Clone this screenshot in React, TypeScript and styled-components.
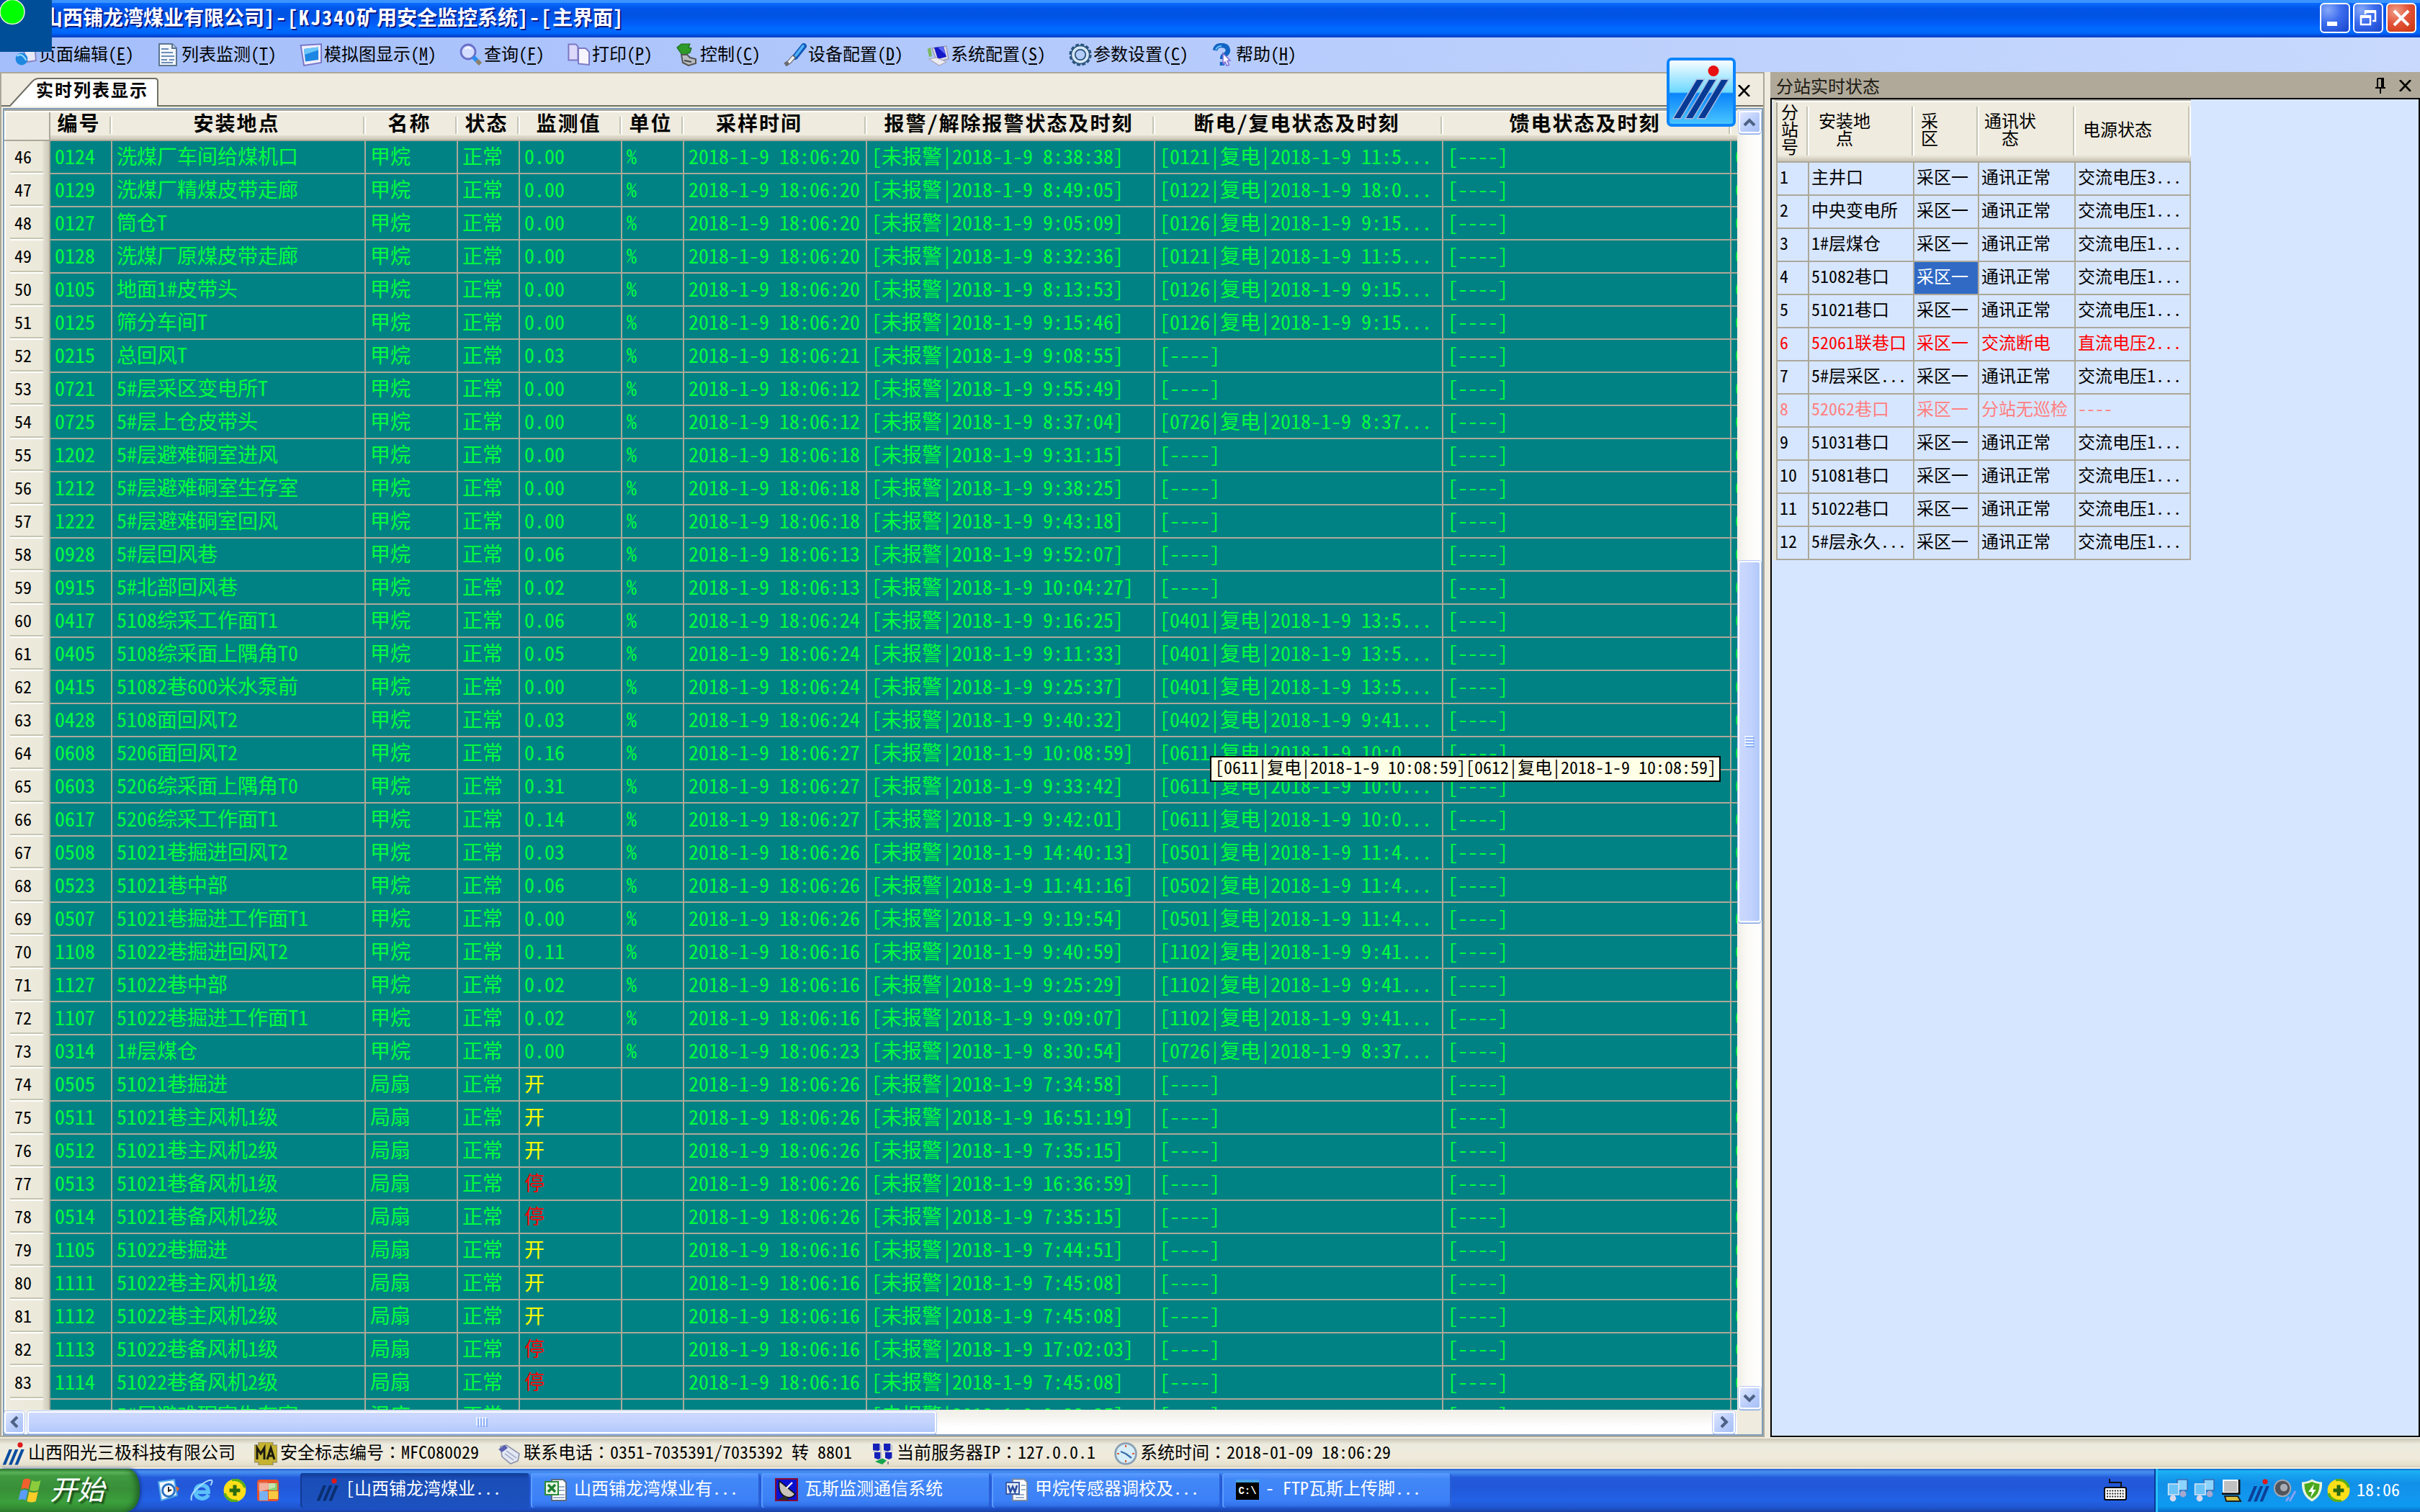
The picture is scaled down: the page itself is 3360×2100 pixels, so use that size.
import React from 'react';
import styled, { createGlobalStyle, css } from 'styled-components';

const Global = createGlobalStyle`
  * { box-sizing: border-box; }
  html, body { margin: 0; padding: 0; overflow: hidden; background: #efebde; }
  body {
    font-family: 'Noto Sans CJK SC', 'Noto Sans', sans-serif;
    font-feature-settings: 'hwid' 1;
    font-size: 24px;
    line-height: 1;
    color: #000;
    white-space: pre;
  }
  svg { display: block; flex: none; }
`;

const line = '#aca899';
const face = '#efebde';

const Screen = styled.div`
  position: relative;
  width: 3360px;
  height: 2100px;
  display: flex;
  flex-direction: column;
  overflow: hidden;
`;

/* ---------- title bar ---------- */
const TitleBar = styled.header`
  height: 52px;
  flex: none;
  display: flex;
  align-items: center;
  justify-content: space-between;
  padding: 0 5px 3px 59px;
  background: linear-gradient(#3a93ff 0, #3a93ff 4px, #0a6dff 4px, #0054e8 12px, #0053e2 22px, #005cf8 32px, #006bff 40px, #0066fa 46px, #0046d2 50px, #003fc4 52px);
`;
const Title = styled.h1`
  margin: 0;
  padding-bottom: 4px;
  font-size: 28px;
  font-weight: 700;
  color: #fff;
  text-shadow: 2px 2px 0 #0a1883;
`;
const Wide = styled.span`
  letter-spacing: 2px;
`;
const WindowButtons = styled.div`
  display: flex;
  gap: 4px;
`;
const WindowButton = styled.button<{ $close?: boolean }>`
  width: 42px;
  height: 42px;
  padding: 0;
  border: 2px solid #fff;
  border-radius: 6px;
  display: grid;
  place-items: center;
  background: ${p => p.$close
    ? 'radial-gradient(circle at 30% 25%, #f0a088 0, #e2553a 45%, #c8330c 100%)'
    : 'radial-gradient(circle at 25% 20%, #86a8f8 0, #3c6cee 45%, #1745cc 100%)'};
`;

/* ---------- menu bar ---------- */
const MenuBar = styled.nav`
  height: 48px;
  flex: none;
  display: flex;
  align-items: center;
  gap: 32px;
  padding-left: 20px;
  background: linear-gradient(90deg, #a4befb, #c8d9fd);
`;
const MenuItem = styled.div`
  display: flex;
  align-items: center;
  gap: 2px;
  height: 48px;
`;
const MenuText = styled.span`
  padding-bottom: 4px;
  u { text-underline-offset: 4px; text-decoration-thickness: 2px; }
`;

/* ---------- work area ---------- */
const Main = styled.main`
  height: 1898px;
  flex: none;
  display: flex;
  gap: 8px;
  background: ${face};
`;
const LeftPane = styled.section`
  width: 2450px;
  height: 1896px;
  display: flex;
  flex-direction: column;
  gap: 2px;
  border: 2px solid ${line};
`;
const TabStrip = styled.div`
  height: 46px;
  flex: none;
  display: flex;
  justify-content: space-between;
  align-items: flex-end;
  padding: 0 17px 0 10px;
  border-bottom: 2px solid #716f64;
`;
const Tab = styled.div`
  width: 208px;
  height: 40px;
  margin-bottom: -2px;
  display: grid;
  > * { grid-area: 1 / 1; }
`;
const TabLabel = styled.span`
  padding: 4px 0 0 38px;
  font-weight: 700;
  letter-spacing: 2px;
`;
const TabClose = styled.div`
  padding-bottom: 12px;
`;
const GridFrame = styled.div`
  flex: 1;
  min-height: 0;
  margin-left: 2px;
  border: 2px solid #7f9db9;
  display: grid;
  grid-template-columns: 2406px 34px;
  grid-template-rows: 1806px 34px;
  background: ${face};
`;
const Sheet = styled.div`
  border-top: 2px solid ${line};
  overflow: hidden;
`;
const cols = '64px 86px 352px 128px 86px 142px 86px 254px 400px 400px 400px 8px';
const HeadRow = styled.div`
  display: grid;
  grid-template-columns: ${cols};
  height: 42px;
  border-top: 2px solid #fff;
  border-bottom: 2px solid ${line};
  background: linear-gradient(${face} 0, ${face} 32px, #e3dfd1 32px, #d8d2c4 35px, #cbc7b8 38px);
`;
const HeadCorner = styled.div`
  border-left: 2px solid #fff;
  border-right: 2px solid ${line};
  background: ${face};
`;
const HeadCell = styled.div<{ $sort?: boolean }>`
  display: flex;
  justify-content: center;
  font-size: 28px;
  font-weight: 700;
  letter-spacing: 2px;
  padding: 0 ${p => (p.$sort ? 46 : 7)}px 0 0;
  background: linear-gradient(90deg, #c6c5b5 50%, #fff 50%) no-repeat right 0 top 6px / 4px 24px;
`;
const DataRow = styled.div`
  display: grid;
  grid-template-columns: ${cols};
  height: 46px;
`;
const RowNo = styled.div`
  display: flex;
  align-items: center;
  padding: 0 0 5px 12px;
  border-left: 2px solid #fff;
  border-right: 2px solid ${line};
  background:
    linear-gradient(#c6c5b0 50%, #fff 50%) no-repeat 6px 42px / 46px 4px,
    linear-gradient(90deg, ${face} 0, #ebe9da 50px, #ddd9ca 54px, #c9c5b5 62px);
`;
type Tone = 'green' | 'yellow' | 'red';
const tones: Record<Tone, string> = { green: '#00ff40', yellow: '#ffff00', red: '#ff0000' };
const Cell = styled.div<{ $tone?: Tone }>`
  display: flex;
  align-items: center;
  overflow: hidden;
  padding: 0 0 5px 6px;
  font-size: 28px;
  line-height: 40px;
  color: ${p => tones[p.$tone ?? 'green']};
  background: #008284;
  border-right: 2px solid ${line};
  border-bottom: 2px solid ${line};
  &:last-child { padding-left: 5px; border-right: 0; }
`;

/* ---------- scroll bars ---------- */
const VTrack = styled.div`
  display: flex;
  flex-direction: column;
  align-items: center;
  padding: 2px 0 0;
  background: linear-gradient(90deg, #f0eee6, #fbfaf6 40%, #fff);
`;
const HTrack = styled.div`
  display: flex;
  align-items: center;
  background: linear-gradient(#f0eee6, #f8f7f4 40%, #fff 70%);
`;
const knob = css`
  display: grid;
  place-items: center;
  border: 2px solid #fff;
  border-radius: 4px;
  box-shadow: 0 0 0 1px #b4c8f4, 0 2px 0 0 #8cabe0;
  flex: none;
`;
const Arrow = styled.div<{ $w?: number }>`
  ${knob}
  width: ${p => p.$w ?? 31}px;
  height: 31px;
  background: linear-gradient(135deg, #dfe7ff, #b8ccfb 60%, #a9c1f7);
`;
const VThumb = styled.div`
  ${knob}
  width: 32px;
  height: 502px;
  margin: 594px 0 645px;
  background: linear-gradient(90deg, #ccd9ff, #c3d3fd 50%, #b2c9fb);
`;
const HThumb = styled.div`
  ${knob}
  width: 1262px;
  height: 31px;
  margin: 0 1078px 0 4px;
  background: linear-gradient(#ced9ff, #c3d3fd 50%, #b2c9fb);
`;

/* ---------- sub-station panel ---------- */
const RightPane = styled.section`
  width: 902px;
  height: 1896px;
  display: flex;
  flex-direction: column;
`;
const PanelTitle = styled.div`
  height: 36px;
  flex: none;
  display: flex;
  align-items: center;
  justify-content: space-between;
  padding: 2px 11px 0 8px;
  background: #b0a999;
  color: #1c1a14;
`;
const PanelTools = styled.div`
  display: flex;
  gap: 18px;
  align-items: center;
`;
const PanelBody = styled.div`
  flex: 1;
  border: 2px solid #000;
  background: #d7e6ff;
  padding-left: 2px;
`;
const StationTable = styled.div`
  width: 580px;
  border-left: 4px solid #e6e3d2;
  border-top: 2px solid ${line};
`;
const stationCols = '46px 146px 90px 134px 160px';
const StationHead = styled.div`
  display: grid;
  grid-template-columns: ${stationCols};
  height: 86px;
  border-top: 2px solid #fff;
  border-bottom: 2px solid ${line};
  background: linear-gradient(${face} 0, ${face} 73px, #e3dfd1 76px, #d5cfc1 79px, #c6c2b4 82px);
`;
const StationHeadCell = styled.div<{ $pad: number }>`
  display: flex;
  flex-direction: column;
  align-items: center;
  justify-content: center;
  text-align: center;
  line-height: 24px;
  padding: 0 ${p => p.$pad}px 9px 0;
  background: linear-gradient(90deg, #c6c5b5 50%, #fff 50%) no-repeat right 0 top 6px / 4px 68px;
  &:first-child { border-left: 2px solid ${line}; }
`;
type Level = 'ok' | 'alarm' | 'lost';
const levels: Record<Level, string> = { ok: '#000', alarm: '#ff0000', lost: '#ff8080' };
const StationRow = styled.div<{ $level: Level }>`
  display: grid;
  grid-template-columns: ${stationCols};
  height: 46px;
  color: ${p => levels[p.$level]};
`;
const StationCell = styled.div<{ $selected?: boolean }>`
  display: flex;
  align-items: center;
  padding: 0 0 6px 3px;
  border-right: 2px solid ${line};
  border-bottom: 2px solid ${line};
  &:first-child { border-left: 2px solid ${line}; }
  ${p => p.$selected && css`
    background: #316ac5;
    color: #fff;
  `}
`;

/* ---------- status bar ---------- */
const StatusBar = styled.footer`
  height: 42px;
  flex: none;
  display: flex;
  align-items: center;
  gap: 26px;
  padding-left: 3px;
  background: linear-gradient(#c8c4b6 0, #dedacb 4px, #ecebdf 8px, #f0ebdb 26px, #e6e1ce 36px, #d8d0bb 40px, #f2efe2 40px);
`;
const StatusItem = styled.div`
  display: flex;
  align-items: center;
  gap: 4px;
`;
const StatusText = styled.span`
  padding-bottom: 6px;
`;
const Colon = styled.span`
  font-family: 'Noto Sans CJK TC', 'Noto Sans CJK JP', sans-serif;
  font-feature-settings: normal;
`;

/* ---------- task bar ---------- */
const TaskBar = styled.footer`
  height: 60px;
  flex: none;
  display: flex;
  color: #fff;
  background: linear-gradient(#2b5fd0 0, #4690f0 4px, #3a80ea 7px, #245bdc 12px, #2157d8 24px, #2361e6 44px, #1f55cf 54px, #1941a5 60px);
`;
const StartButton = styled.div`
  width: 194px;
  display: flex;
  align-items: center;
  gap: 10px;
  padding-left: 22px;
  border-radius: 0 16px 20px 0 / 0 28px 28px 0;
  background: linear-gradient(#2c7a2c 0, #5cb45c 5px, #3f9a3f 10px, #388f38 28px, #3ba03b 46px, #2f8030 60px);
  box-shadow: inset -8px 0 10px -4px #1d5d22, 2px 0 4px #16389c;
`;
const StartText = styled.span`
  font-size: 38px;
  font-style: italic;
  text-shadow: 3px 3px 2px #1c4f1c;
  padding-bottom: 6px;
`;
const QuickLaunch = styled.div`
  width: 223px;
  display: flex;
  align-items: center;
  gap: 14px;
  padding-left: 24px;
`;
const Tasks = styled.div`
  display: flex;
  gap: 2px;
  align-items: center;
  flex: 1;
`;
const TaskButton = styled.div<{ $active?: boolean }>`
  width: 318px;
  height: 48px;
  display: flex;
  align-items: center;
  gap: 9px;
  padding: 0 0 2px ${p => (p.$active ? 22 : 19)}px;
  border-radius: 4px;
  background: ${p => p.$active
    ? 'linear-gradient(#123c98, #1a4db6 8px, #1c52c0)'
    : 'linear-gradient(#5a9cff, #4288f8 8px, #3c80f6 38px, #2e6ce4)'};
  box-shadow: inset 2px 0 0 ${p => (p.$active ? '#123a94' : '#5c9cfc')}, inset -2px -2px 0 ${p => (p.$active ? '#1b4fbc' : '#2a60d4')};
`;
const TaskText = styled.span`
  padding-bottom: 6px;
`;
const Keyboard = styled.div`
  display: flex;
  align-items: center;
  padding-right: 38px;
`;
const Tray = styled.div`
  width: 369px;
  display: flex;
  align-items: center;
  gap: 5px;
  padding-left: 16px;
  border-left: 2px solid #0a3a98;
  background: linear-gradient(#0c5ac8 0, #1cb4f4 3px, #18a4f0 8px, #1290e8 20px, #1296ee 40px, #0c9af0 52px, #0a6cc8 60px);
  box-shadow: inset 3px 0 0 #24c0f8;
`;
const Clock = styled.span`
  padding: 0 0 5px 4px;
`;

/* ---------- floating windows over the desktop ---------- */
const CornerBadge = styled.div`
  position: absolute;
  left: 0;
  top: 0;
  width: 72px;
  height: 72px;
  background: #004e98;
`;
const LogoBadge = styled.div`
  position: absolute;
  left: 2314px;
  top: 80px;
`;
const Tip = styled.div`
  position: absolute;
  left: 1680px;
  top: 1050px;
  width: 709px;
  height: 36px;
  display: flex;
  align-items: center;
  padding: 0 0 6px 5px;
  border: 2px solid #000;
  background: #ffffe7;
`;

/* ---------- icons (16-unit artboards) ---------- */
const Icon = ({ children, size = 32 }: { children: React.ReactNode; size?: number }) => (
  <svg width={size} height={size} viewBox="0 0 16 16">{children}</svg>
);
const PageIcon = () => (
  <Icon><path d="M5 1h9l1 11-6 1z" fill="#e8e8f8" stroke="#8a86c4" /><circle cx="5" cy="11" r="4.2" fill="#1e88e0" /><path d="M2 9q2-2 4 0t2 3" fill="none" stroke="#9fe0ff" /></Icon>
);
const ListIcon = () => (
  <Icon><path d="M1.5.5h9l3 3v12h-12z" fill="#f4f8fd" stroke="#5d7590" /><path d="M10.5.5v3h3" fill="#c5d4e4" stroke="#5d7590" /><path d="M3 4h5M3 6.500h8M3 9h9M3 11.500h4M8.500 11.500h3.500M3 13.500h8" stroke="#6c8db8" /></Icon>
);
const PictureIcon = () => (
  <Icon><path d="M.8 1.500 15 .6v12.900L3 15.500z" fill="#f0effc" stroke="#7a78c8" /><path d="M3 4l10-1.200v8.700L4 12.800z" fill="#1c86e2" /><path d="M3 4l10-1.200v2L3.400 8z" fill="#6cc6f8" /></Icon>
);
const SearchIcon = () => (
  <Icon><circle cx="6" cy="6" r="5" fill="#d4dcff" stroke="#6a70c8" strokeWidth="1.400" /><path d="M4 4q2-2 4 0" stroke="#fff" fill="none" /><path d="M9.500 9.500l2.500 2.500" stroke="#2a8cf0" strokeWidth="3" /><path d="M12 12l2.500 2.500" stroke="#8b806a" strokeWidth="3" /></Icon>
);
const PrintIcon = () => (
  <Icon><path d="M.7.7h5l1.500 1.600v9.500H.7z" fill="#dcd8fa" stroke="#7c78c4" /><path d="M7.500 3.500h5l2.500 2.500v9l-7.500-.8z" fill="#f6f5ff" stroke="#7c78c4" /></Icon>
);
const ControlIcon = () => (
  <Icon><path d="M1 3 4 .5h6L9 3l2 .5-1 3-5 2-2-2.500z" fill="#2f9a28" stroke="#1b6b1a" strokeWidth=".6" /><path d="M4 8h4l2 2 4 1v3l-5 1.500-4-2z" fill="#b8bcc0" stroke="#555" /><path d="M6 12l5 1" stroke="#444" /></Icon>
);
const BrushIcon = () => (
  <Icon><path d="M14 2 8 9.500" stroke="#1158b8" strokeWidth="4" strokeLinecap="round" /><path d="M13.500 2 8.500 8.500" stroke="#53b4f8" strokeWidth="1.800" strokeLinecap="round" /><path d="M7.500 9 4 13l-3 2" stroke="#6c6c70" strokeWidth="3" fill="none" /><path d="M7 9.500 3.500 13.500" stroke="#f2f2f2" strokeWidth="1.800" /></Icon>
);
const ComputerIcon = () => (
  <Icon><path d="M4 3.500 14 2l1.500 9-8 2z" fill="#dcdce8" stroke="#9a9ab0" strokeWidth=".7" /><path d="M5.500 3 12 2.200 14 9.500 8 11z" fill="#1418c8" /><path d="M8 3l4-.6L13.500 8z" fill="#5a66f0" /><path d="M2 11l5-1 7 3-5 2.500z" fill="#ecebf2" stroke="#a8a8b8" strokeWidth=".6" /><path d="M.8 4 3 3l1 6-2 .5z" fill="#7cb860" /></Icon>
);
const GearIcon = () => (
  <Icon><circle cx="8" cy="8" r="6.800" fill="none" stroke="#29527c" strokeWidth="2" strokeDasharray="2.300 1.260" /><circle cx="8" cy="8" r="5.200" fill="none" stroke="#d5e6f4" strokeWidth="2.600" /><circle cx="8" cy="8" r="6.300" fill="none" stroke="#29527c" strokeWidth=".8" /><circle cx="8" cy="8" r="3.600" fill="#b4ccf8" stroke="#29527c" strokeWidth=".9" /></Icon>
);
const HelpIcon = () => (
  <Icon><path d="M2.500 5Q3 1.500 7 1.500t4.500 3.200Q11.500 7 9 8.200 7.500 9 7.500 11M7.500 13v2.500" fill="none" stroke="#1264c4" strokeWidth="3.200" /><path d="M3 4.500Q4 2 7 2" fill="none" stroke="#6cc2fa" /><path d="M8 7l5 5-2 .3 1.200 2.700-1.500.6L9.500 13 8 14.500z" fill="#fff" stroke="#8270d8" strokeWidth=".8" /></Icon>
);
const SlashLogo = ({ color = '#0b4da0' }: { color?: string }) => (
  <Icon><path d="M.3 15.800 4.800 5H7L2.500 15.800zM4.500 15.800 9 5h2.200L6.700 15.800zM8.700 15.800 13.200 5h2.200L10.900 15.800z" fill={color} /><circle cx="12.500" cy="1.900" r="1.800" fill="#e01818" /></Icon>
);
const MaIcon = () => (
  <Icon><path d="M3 0h10v2h3v12h-3v2H3v-2H0V2h3z" fill="#c4b230" stroke="#8a8070" strokeWidth=".6" /><path d="M2 12V4l2.500 4L7 4v8M9 12l2.500-8L14 12M10 9.500h3" fill="none" stroke="#1a1a10" strokeWidth="1.500" /></Icon>
);
const PhoneIcon = () => (
  <Icon><path d="M2 3l4-1 9 6-1 5-5 2-6-5z" fill="#e4e8f4" stroke="#8a90a8" strokeWidth=".8" /><path d="M.5 5 5 2l2 2-4 3z" fill="#5a5fb0" /><path d="M6 6l7 5M5 8l6 4.500" stroke="#a8b0cc" strokeWidth=".8" /></Icon>
);
const ServerIcon = () => (
  <Icon><path d="M1.500 1h4.700v4.500l-2 1-2.700-1zM9 1h4.700v4.500l-2 1-2.700-1zM2.500 7h4.700v4l-2 1-2.700-1zM10 7h4.700v4l-2 1-2.700-1z" fill="#1420b8" /><path d="M7 2v9M14.700 2v4M1.500 6.200h3M9 6.500h2" stroke="#b8bcc8" strokeWidth=".8" /><path d="M3 13.500l5-2.200 3 1.500-3 2.700z" fill="#16a44c" /><path d="M12 13.500v2" stroke="#889" /></Icon>
);
const ClockIcon = () => (
  <Icon><circle cx="8" cy="8" r="7.200" fill="#d6eefa" stroke="#8aa0b4" strokeWidth="1.400" /><path d="M8 8 4.500 6.500M8 8l4 3" stroke="#3a6ea8" strokeWidth="1.200" /><path d="M8 2v1.500M8 12.500V14M2 8h1.500M12.500 8H14" stroke="#e05a30" /></Icon>
);
const FlagIcon = () => (
  <svg width="37" height="37" viewBox="0 0 18 18">
    <path d="M5 1.500q2.500-1.500 5 0L8.500 8q-2.500-1.500-5 0z" fill="#f0602c" />
    <path d="M10.800 2q3 1.500 6 0l-1.600 6.500q-3 1.500-6 0z" fill="#8ccc3c" />
    <path d="M3.200 9q2.500-1.500 5 0l-1.500 6.500q-2.500-1.500-5 0z" fill="#5a9cf8" />
    <path d="M9 9.500q3 1.500 6 0L13.500 16q-3 1.500-6 0z" fill="#fccc28" />
  </svg>
);
const OutlookIcon = () => (
  <Icon><path d="M1 2l11-1.500 2 11L3 15z" fill="#e8f4fe" stroke="#48a0e8" /><circle cx="8" cy="8" r="4.200" fill="#fff" stroke="#2a6fc0" strokeWidth="1.500" /><path d="M8 5.500v3l2-1" stroke="#222" fill="none" /><path d="M13 5l2.500 1.500L14 9z" fill="#f07020" /></Icon>
);
const IeIcon = () => (
  <Icon><path d="M12.800 11Q11 13.800 8 13.600 3.600 13 3.600 8.800 4 4.600 8.200 4.400q4.400.4 4.400 4.800H5" fill="none" stroke="#5cc0fa" strokeWidth="2.700" /><path d="M1 15Q-.5 11 6 5.500T15 1q.8 1-.8 3.500" fill="none" stroke="#a8dcfc" strokeWidth="1" /></Icon>
);
const PlusIcon = () => (
  <Icon><circle cx="8" cy="8" r="7.700" fill="#ffe018" /><path d="M6 .8A7.400 7.400 0 0 1 15 6M10 15.200A7.400 7.400 0 0 1 1 10" fill="none" stroke="#5cae18" strokeWidth="1.800" /><path d="M8 4.300v7.400M4.300 8h7.400" stroke="#2c6a10" strokeWidth="2.500" /></Icon>
);
const MediaIcon = () => (
  <Icon><rect x=".5" y=".5" width="15" height="15" rx="2" fill="#e8512c" /><path d="M1 2h7v6H1z" fill="#e87050" /><path d="M8.500 3h6v5h-6z" fill="#8cd070" /><path d="M2 8.500h6V15H2z" fill="#78b0f4" /><path d="M8.500 8.500H15V14H8.500z" fill="#f8c840" /><path d="M2 3h11v3L2 9z" fill="#fff" opacity=".45" /></Icon>
);
const ExcelIcon = () => (
  <Icon><path d="M5 1h8l2 2v12.500H5z" fill="#fff" stroke="#5d6b80" /><path d="M10 6h4M10 8.500h4M6 11.500h8M6 13.500h8" stroke="#9ab0c8" /><path d="M.5 2.500h9v9h-9z" fill="#e8f6e4" stroke="#2c8a38" /><path d="M2.500 4.500l5 5M7.500 4.500l-5 5" stroke="#1f8030" strokeWidth="1.700" /></Icon>
);
const DishIcon = () => (
  <Icon><path d="M.5.500h15v15H.5z" fill="#0a10d0" stroke="#8a0830" /><path d="M3 2q-1 8 3.500 10.500T14 11z" fill="#c8c4bc" stroke="#111" strokeWidth=".8" /><path d="M8 7l4-4" stroke="#fff" strokeWidth="1.200" /><path d="M2 15l5-3 3 3.500z" fill="#2a2a2a" /></Icon>
);
const WordIcon = () => (
  <Icon><path d="M5 .8h8l2 2v12.700H5z" fill="#fff" stroke="#7d8ba0" /><path d="M7 11.500h6M7 13.500h6M11 5h3M11 8h3" stroke="#9ab0c8" /><path d="M.5 3h9v8h-9z" fill="#e4ecfa" stroke="#3a5ca8" /><path d="M2 5l1.400 4.500L5 6l1.600 3.500L8 5" fill="none" stroke="#2a4ca0" strokeWidth="1.300" /></Icon>
);
const ConsoleMark = styled.div`
  width: 32px;
  height: 28px;
  flex: none;
  display: grid;
  place-items: center;
  border-top: 4px solid #48a4e8;
  background: #000;
  font: 700 14px/22px 'Liberation Mono', monospace;
  color: #fff;
`;
const KeyboardIcon = () => (
  <svg width="32" height="32" viewBox="0 0 16 16">
    <path d="M4 0v2.500h8v4" fill="none" stroke="#111" />
    <rect x=".5" y="6" width="15" height="8.500" rx="1" fill="#fff" stroke="#000" />
    <path d="M2 8.200h12M2 10.200h12M2 12.300h12" stroke="#222" strokeDasharray="1 .8" />
  </svg>
);
const NetIcon = () => (
  <Icon><path d="M7 .5h7v7.500H7z" fill="#8cd4fc" stroke="#3a6cb4" strokeWidth=".8" /><path d="M.8 3.500h7.200V11H.8z" fill="#6cc4f8" stroke="#d8e4f4" strokeWidth=".8" /><circle cx="4" cy="13.500" r="2.200" fill="#d8d8ec" /><circle cx="11" cy="10.500" r="2.200" fill="#a8a8cc" /></Icon>
);
const MonitorIcon = () => (
  <Icon><path d="M2 1h10v8.500H2z" fill="#c0c0c0" stroke="#fff" /><path d="M1 10.300h12V.5" fill="none" stroke="#111" strokeWidth="1.400" /><path d="M3 12h9l2 3.500H4z" fill="#d8c040" stroke="#222" /></Icon>
);
const SpeakerIcon = () => (
  <Icon><circle cx="6" cy="6.500" r="5.600" fill="#50545c" stroke="#a4a8b0" /><circle cx="7" cy="6" r="2.600" fill="#a8acb4" /><path d="M11 15.500l4-7M8.500 15.500l2-3" stroke="#8aa0f4" strokeWidth="1.400" /></Icon>
);
const ShieldIcon = () => (
  <Icon><path d="M8 .3q3.500 2 7 2 .5 9.700-7 13.400Q.5 12 1 2.300q3.500 0 7-2z" fill="#e8f4d8" /><path d="M8 2q2.700 1.400 5.300 1.500 0 7.500-5.300 10.300Q2.700 11 2.700 3.500 5.300 3.400 8 2z" fill="#4aa81c" /><path d="M9.500 3.500 5.500 9H8l-1 4 3.800-5.500H8.600z" fill="#fff" /></Icon>
);

const CloseGlyph = ({ w = 19 }: { w?: number }) => (
  <svg width={w} height="16" viewBox="0 0 19 16"><path d="M2 0 17 16M17 0 2 16" stroke="#000" strokeWidth="2.600" /></svg>
);
const Chevron = ({ turn }: { turn: number }) => (
  <svg width="18" height="18" viewBox="0 0 18 18" style={{ transform: `rotate(${turn}deg)` }}>
    <path d="M2 13 9 6l7 7" fill="none" stroke="#4d6185" strokeWidth="4" />
  </svg>
);

/* ---------- data ---------- */
const menu: [React.FC, string, string][] = [
  [PageIcon, '页面编辑', 'E'],
  [ListIcon, '列表监测', 'T'],
  [PictureIcon, '模拟图显示', 'M'],
  [SearchIcon, '查询', 'F'],
  [PrintIcon, '打印', 'P'],
  [ControlIcon, '控制', 'C'],
  [BrushIcon, '设备配置', 'D'],
  [ComputerIcon, '系统配置', 'S'],
  [GearIcon, '参数设置', 'C'],
  [HelpIcon, '帮助', 'H'],
];

const heads: [string, boolean?][] = [
  ['编号'], ['安装地点'], ['名称'], ['状态'], ['监测值'], ['单位'],
  ['采样时间', true], ['报警/解除报警状态及时刻'], ['断电/复电状态及时刻'], ['馈电状态及时刻'],
];

/* id, place, value, sample seconds, alarm time, power-cut record */
const methane: [string, string, string, string, string, string][] = [
  ['0124', '洗煤厂车间给煤机口', '0.00', '20', '8:38:38', '0121 11:5'],
  ['0129', '洗煤厂精煤皮带走廊', '0.00', '20', '8:49:05', '0122 18:0'],
  ['0127', '筒仓T', '0.00', '20', '9:05:09', '0126 9:15'],
  ['0128', '洗煤厂原煤皮带走廊', '0.00', '20', '8:32:36', '0121 11:5'],
  ['0105', '地面1#皮带头', '0.00', '20', '8:13:53', '0126 9:15'],
  ['0125', '筛分车间T', '0.00', '20', '9:15:46', '0126 9:15'],
  ['0215', '总回风T', '0.03', '21', '9:08:55', ''],
  ['0721', '5#层采区变电所T', '0.00', '12', '9:55:49', ''],
  ['0725', '5#层上仓皮带头', '0.00', '12', '8:37:04', '0726 8:37'],
  ['1202', '5#层避难硐室进风', '0.00', '18', '9:31:15', ''],
  ['1212', '5#层避难硐室生存室', '0.00', '18', '9:38:25', ''],
  ['1222', '5#层避难硐室回风', '0.00', '18', '9:43:18', ''],
  ['0928', '5#层回风巷', '0.06', '13', '9:52:07', ''],
  ['0915', '5#北部回风巷', '0.02', '13', '10:04:27', ''],
  ['0417', '5108综采工作面T1', '0.06', '24', '9:16:25', '0401 13:5'],
  ['0405', '5108综采面上隅角T0', '0.05', '24', '9:11:33', '0401 13:5'],
  ['0415', '51082巷600米水泵前', '0.00', '24', '9:25:37', '0401 13:5'],
  ['0428', '5108面回风T2', '0.03', '24', '9:40:32', '0402 9:41'],
  ['0608', '5206面回风T2', '0.16', '27', '10:08:59', '0611 10:0'],
  ['0603', '5206综采面上隅角T0', '0.31', '27', '9:33:42', '0611 10:0'],
  ['0617', '5206综采工作面T1', '0.14', '27', '9:42:01', '0611 10:0'],
  ['0508', '51021巷掘进回风T2', '0.03', '26', '14:40:13', '0501 11:4'],
  ['0523', '51021巷中部', '0.06', '26', '11:41:16', '0502 11:4'],
  ['0507', '51021巷掘进工作面T1', '0.00', '26', '9:19:54', '0501 11:4'],
  ['1108', '51022巷掘进回风T2', '0.11', '16', '9:40:59', '1102 9:41'],
  ['1127', '51022巷中部', '0.02', '16', '9:25:29', '1102 9:41'],
  ['1107', '51022巷掘进工作面T1', '0.02', '16', '9:09:07', '1102 9:41'],
  ['0314', '1#层煤仓', '0.00', '23', '8:30:54', '0726 8:37'],
];
const fans: [string, string, string, string, string][] = [
  ['0505', '51021巷掘进', '开', '26', '7:34:58'],
  ['0511', '51021巷主风机1级', '开', '26', '16:51:19'],
  ['0512', '51021巷主风机2级', '开', '26', '7:35:15'],
  ['0513', '51021巷备风机1级', '停', '26', '16:36:59'],
  ['0514', '51021巷备风机2级', '停', '26', '7:35:15'],
  ['1105', '51022巷掘进', '开', '16', '7:44:51'],
  ['1111', '51022巷主风机1级', '开', '16', '7:45:08'],
  ['1112', '51022巷主风机2级', '开', '16', '7:45:08'],
  ['1113', '51022巷备风机1级', '停', '16', '17:02:03'],
  ['1114', '51022巷备风机2级', '停', '16', '7:45:08'],
];

interface Reading {
  id: string;
  place: string;
  kind: string;
  value: string;
  unit: string;
  time: string;
  alarm: string;
  cut: string;
}
const readings: Reading[] = [
  ...methane.map(([id, place, value, s, alarm, cut]) => {
    const [no, at] = cut.split(' ');
    return {
      id, place, kind: '甲烷', value, unit: '%', time: `2018-1-9 18:06:${s}`, alarm,
      cut: cut ? `[${no}|复电|2018-1-9 ${at}...` : '[----]',
    };
  }),
  ...fans.map(([id, place, value, s, alarm]) => ({
    id, place, kind: '局扇', value, unit: '', time: `2018-1-9 18:06:${s}`, alarm, cut: '[----]',
  })),
  { id: '', place: '5#层避难硐室生存室', kind: '温度', value: '', unit: '', time: '', alarm: '9:38:25', cut: '[----]' },
];
const toneOf = (v: string): Tone => (v === '开' ? 'yellow' : v === '停' ? 'red' : 'green');

const stations: [string, string, string, Level][] = [
  ['主井口', '通讯正常', '交流电压3...', 'ok'],
  ['中央变电所', '通讯正常', '交流电压1...', 'ok'],
  ['1#层煤仓', '通讯正常', '交流电压1...', 'ok'],
  ['51082巷口', '通讯正常', '交流电压1...', 'ok'],
  ['51021巷口', '通讯正常', '交流电压1...', 'ok'],
  ['52061联巷口', '交流断电', '直流电压2...', 'alarm'],
  ['5#层采区...', '通讯正常', '交流电压1...', 'ok'],
  ['52062巷口', '分站无巡检', '----', 'lost'],
  ['51031巷口', '通讯正常', '交流电压1...', 'ok'],
  ['51081巷口', '通讯正常', '交流电压1...', 'ok'],
  ['51022巷口', '通讯正常', '交流电压1...', 'ok'],
  ['5#层永久...', '通讯正常', '交流电压1...', 'ok'],
];
const stationHeads: [string[], number][] = [
  [['分', '站', '号'], 10],
  [['安装地', '点'], 48],
  [['采', '区'], 48],
  [['通讯状', '态'], 48],
  [['电源状态'], 44],
];

const status: [React.FC, string, string][] = [
  [SlashLogo, '山西阳光三极科技有限公司', ''],
  [MaIcon, '安全标志编号', 'MFC080029'],
  [PhoneIcon, '联系电话', '0351-7035391/7035392 转 8801'],
  [ServerIcon, '当前服务器IP', '127.0.0.1'],
  [ClockIcon, '系统时间', '2018-01-09 18:06:29'],
];
const Console = () => <ConsoleMark>C:\</ConsoleMark>;
const tasks: [React.FC, string][] = [
  [() => <SlashLogo color="#0a2f70" />, '[山西铺龙湾煤业...'],
  [ExcelIcon, '山西铺龙湾煤业有...'],
  [DishIcon, '瓦斯监测通信系统'],
  [WordIcon, '甲烷传感器调校及...'],
  [Console, '- FTP瓦斯上传脚...'],
];

export default function App() {
  return (
    <Screen>
      <Global />
      <TitleBar>
        <Title>山西铺龙湾煤业有限公司<Wide>]-[KJ340</Wide>矿用安全监控系统<Wide>]-[</Wide>主界面]</Title>
        <WindowButtons>
          <WindowButton>
            <svg width="30" height="30" viewBox="0 0 30 30"><path d="M4 20h14v6H4z" fill="#fff" /></svg>
          </WindowButton>
          <WindowButton>
            <svg width="30" height="30" viewBox="0 0 30 30"><path d="M11 10V6h14v13h-4" fill="none" stroke="#fff" strokeWidth="2.500" /><path d="M10 6h16" stroke="#fff" strokeWidth="4" /><path d="M5 13h13v11H5z" fill="none" stroke="#fff" strokeWidth="2.500" /><path d="M4 13h15" stroke="#fff" strokeWidth="4" /></svg>
          </WindowButton>
          <WindowButton $close>
            <svg width="30" height="30" viewBox="0 0 30 30"><path d="M5 5l20 20M25 5 5 25" stroke="#fff" strokeWidth="4" /></svg>
          </WindowButton>
        </WindowButtons>
      </TitleBar>

      <MenuBar>
        {menu.map(([Glyph, label, key]) => (
          <MenuItem key={label}>
            <Glyph />
            <MenuText>{label}(<u>{key}</u>)</MenuText>
          </MenuItem>
        ))}
      </MenuBar>

      <Main>
        <LeftPane>
          <TabStrip>
            <Tab>
              <svg width="208" height="40" viewBox="0 0 208 40">
                <path d="M1 40 33 5Q37 1 42 1H203Q207 1 207 5V40" fill="#fff" stroke="#716f64" strokeWidth="2" />
              </svg>
              <TabLabel>实时列表显示</TabLabel>
            </Tab>
            <TabClose><CloseGlyph /></TabClose>
          </TabStrip>
          <GridFrame>
            <Sheet>
              <HeadRow>
                <HeadCorner />
                {heads.map(([label, sort]) => <HeadCell key={label} $sort={sort}>{label}</HeadCell>)}
              </HeadRow>
              {readings.map((r, i) => (
                <DataRow key={i}>
                  <RowNo>{46 + i}</RowNo>
                  <Cell>{r.id}</Cell>
                  <Cell>{r.place}</Cell>
                  <Cell>{r.kind}</Cell>
                  <Cell>正常</Cell>
                  <Cell $tone={toneOf(r.value)}>{r.value}</Cell>
                  <Cell>{r.unit}</Cell>
                  <Cell>{r.time}</Cell>
                  <Cell>[未报警|2018-1-9 {r.alarm}]</Cell>
                  <Cell>{r.cut}</Cell>
                  <Cell>[----]</Cell>
                  <Cell>0</Cell>
                </DataRow>
              ))}
            </Sheet>
            <VTrack>
              <Arrow><Chevron turn={0} /></Arrow>
              <VThumb>
                <svg width="14" height="16" viewBox="0 0 14 16"><path d="M0 1h12M0 5h12M0 9h12M0 13h12" stroke="#eef4ff" strokeWidth="2" /><path d="M2 3h12M2 7h12M2 11h12M2 15h12" stroke="#8cb0f8" strokeWidth="2" /></svg>
              </VThumb>
              <Arrow><Chevron turn={180} /></Arrow>
            </VTrack>
            <HTrack>
              <Arrow $w={28}><Chevron turn={270} /></Arrow>
              <HThumb>
                <svg width="16" height="14" viewBox="0 0 16 14"><path d="M1 0v12M5 0v12M9 0v12M13 0v12" stroke="#eef4ff" strokeWidth="2" /><path d="M3 2v12M7 2v12M11 2v12M15 2v12" stroke="#8cb0f8" strokeWidth="2" /></svg>
              </HThumb>
              <Arrow><Chevron turn={90} /></Arrow>
            </HTrack>
          </GridFrame>
        </LeftPane>

        <RightPane>
          <PanelTitle>
            <span>分站实时状态</span>
            <PanelTools>
              <svg width="14" height="22" viewBox="0 0 14 22"><path d="M3 1h8v12M3 1v12M9 1v12M0 14h14M7 14v8" fill="none" stroke="#000" strokeWidth="2" /></svg>
              <CloseGlyph />
            </PanelTools>
          </PanelTitle>
          <PanelBody>
            <StationTable>
              <StationHead>
                {stationHeads.map(([lines, pad]) => (
                  <StationHeadCell key={lines[0]} $pad={pad}>
                    {lines.map(l => <span key={l}>{l}</span>)}
                  </StationHeadCell>
                ))}
              </StationHead>
              {stations.map(([place, comm, power, level], i) => (
                <StationRow key={place} $level={level}>
                  <StationCell>{i + 1}</StationCell>
                  <StationCell>{place}</StationCell>
                  <StationCell $selected={i === 3}>采区一</StationCell>
                  <StationCell>{comm}</StationCell>
                  <StationCell>{power}</StationCell>
                </StationRow>
              ))}
            </StationTable>
          </PanelBody>
        </RightPane>
      </Main>

      <StatusBar>
        {status.map(([Glyph, label, value]) => (
          <StatusItem key={label}>
            <Glyph />
            <StatusText>{label}{value && <Colon>：</Colon>}{value}</StatusText>
          </StatusItem>
        ))}
      </StatusBar>

      <TaskBar>
        <StartButton>
          <FlagIcon />
          <StartText>开始</StartText>
        </StartButton>
        <QuickLaunch>
          <OutlookIcon />
          <IeIcon />
          <PlusIcon />
          <MediaIcon />
        </QuickLaunch>
        <Tasks>
          {tasks.map(([Glyph, label], i) => (
            <TaskButton key={label} $active={i === 0}>
              <Glyph />
              <TaskText>{label}</TaskText>
            </TaskButton>
          ))}
        </Tasks>
        <Keyboard><KeyboardIcon /></Keyboard>
        <Tray>
          <NetIcon />
          <NetIcon />
          <MonitorIcon />
          <SlashLogo color="#0b3f98" />
          <SpeakerIcon />
          <ShieldIcon />
          <PlusIcon />
          <Clock>18:06</Clock>
        </Tray>
      </TaskBar>

      <CornerBadge>
        <svg width="36" height="36" viewBox="0 0 36 36"><circle cx="17" cy="16.500" r="17" fill="#00ff00" stroke="#e8f0d8" strokeWidth="1.500" /></svg>
      </CornerBadge>
      <LogoBadge>
        <svg width="96" height="96" viewBox="0 0 96 96">
          <defs>
            <linearGradient id="sky" x1="0" y1="0" x2="0" y2="1">
              <stop offset="0" stopColor="#ffffff" />
              <stop offset=".5" stopColor="#6cd8ff" />
              <stop offset=".52" stopColor="#0a84fa" />
              <stop offset="1" stopColor="#4cc8ff" />
            </linearGradient>
          </defs>
          <rect x="2" y="2" width="92" height="92" rx="5" fill="url(#sky)" stroke="#0a84fc" strokeWidth="4" />
          <path d="M42 31h9L19 84h-9zM59 31h9L36 84h-9zM76 31h9L53 84h-9z" fill="#063a94" stroke="#a8b8dc" strokeWidth="3" paintOrder="stroke" />
          <circle cx="65" cy="18.500" r="7.500" fill="#e81010" />
        </svg>
      </LogoBadge>
      <Tip>[0611|复电|2018-1-9 10:08:59][0612|复电|2018-1-9 10:08:59]</Tip>
    </Screen>
  );
}
